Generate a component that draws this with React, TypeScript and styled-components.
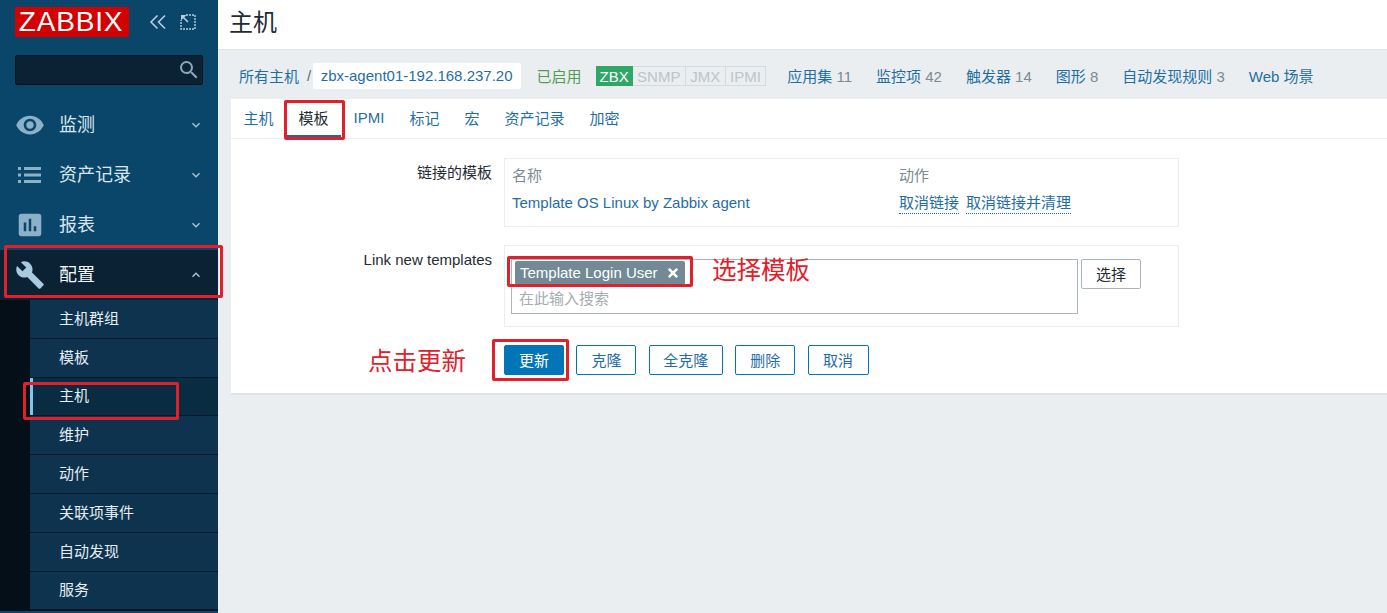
import React from 'react';
import styled, { createGlobalStyle } from 'styled-components';
import { MdVisibility, MdAssessment, MdBuild, MdSearch, MdExpandMore, MdExpandLess } from 'react-icons/md';
import { FaTimes } from 'react-icons/fa';

const FONT = `"Liberation Sans", "Noto Sans CJK SC", sans-serif`;

const GlobalStyle = createGlobalStyle`
  html, body {
    margin: 0;
    padding: 0;
    height: 100%;
    overflow: hidden;
    background: #ebeef0;
    font-family: ${FONT};
    font-size: 15px;
  }
  * { box-sizing: border-box; }
`;

const Page = styled.div`
  position: relative;
  display: flex;
  width: 1387px;
  height: 613px;
  overflow: hidden;
`;

/* sidebar */
const Sidebar = styled.aside`
  width: 218px;
  flex: none;
  background: #0a466a;
  display: flex;
  flex-direction: column;
`;

const LogoRow = styled.div`
  display: flex;
  align-items: center;
  height: 30px;
  margin: 7px 0 0 15px;
`;

const Logo = styled.div`
  width: 114px;
  height: 30px;
  padding-right: 2px;
  background: #d40000;
  color: #fff;
  font-size: 28px;
  line-height: 30px;
  text-align: center;
  letter-spacing: 0.8px;
`;

const LogoTools = styled.div`
  display: flex;
  align-items: center;
  gap: 13px;
  margin-left: 20px;
  color: #b7cfe0;
`;

const SearchBox = styled.div`
  width: 188px;
  height: 30px;
  margin: 18px 0 15px 15px;
  background: #0a2233;
  border: 1px solid #04121c;
  border-radius: 2px;
  display: flex;
  align-items: center;
  justify-content: flex-end;
  padding-right: 1px;
  color: #8ba8ba;
  font-size: 24px;
`;

const MenuItem = styled.div<{ $active?: boolean }>`
  height: 50px;
  display: flex;
  align-items: center;
  background: ${p => (p.$active ? '#0a2233' : 'transparent')};
  color: ${p => (p.$active ? '#f2f6f9' : '#dbe7ef')};
  font-size: 18px;
`;

const MenuIcon = styled.div<{ $active?: boolean }>`
  width: 59px;
  flex: none;
  display: flex;
  justify-content: center;
  color: ${p => (p.$active ? '#a9c9e0' : '#8db0c9')};
  font-size: 30px;
`;

const MenuLabel = styled.div`
  flex: 1;
  padding-bottom: 5px;
`;

const MenuCaret = styled.div`
  width: 44px;
  flex: none;
  display: flex;
  justify-content: center;
  font-size: 16px;
  color: #a9c4d6;
`;

const SubMenu = styled.div`
  background: #040f17;
  padding-left: 30px;
  height: 311px;
  flex: none;
`;

const SubItem = styled.div<{ $active?: boolean }>`
  position: relative;
  height: 38.8px;
  display: flex;
  align-items: center;
  padding: 0 0 3px 29px;
  background: ${p => (p.$active ? '#0a2c43' : '#0e334e')};
  border-bottom: 1px solid #06192a;
  color: #e6eef4;
  font-size: 15px;

  ${p =>
    p.$active &&
    `&::before {
      content: '';
      position: absolute;
      left: 0;
      top: 0;
      bottom: 0;
      width: 3px;
      background: #7fc4f2;
    }`}
`;

/* main area */
const Main = styled.main`
  flex: 1;
  display: flex;
  flex-direction: column;
  min-width: 0;
`;

const Header = styled.header`
  height: 50px;
  flex: none;
  background: #fff;
  border-bottom: 1px solid #dfe4e7;
  padding: 5px 0 0 12px;
`;

const Title = styled.h1`
  margin: 0 0 0 -1px;
  font-size: 24px;
  font-weight: 400;
  line-height: 36px;
  color: #1f2c33;
`;

const NavBar = styled.nav`
  height: 49px;
  flex: none;
  display: flex;
  align-items: center;
  padding: 2px 0 0 21px;
  color: #1f6ea3;
`;

const NavLink = styled.span`
  color: #1f6ea3;
  white-space: nowrap;
`;

const Slash = styled.span`
  margin: 0 1.5px 0 8px;
  color: #5a6a75;
`;

const HostChip = styled.span`
  background: #fff;
  border-radius: 2px;
  height: 26px;
  line-height: 26px;
  padding: 0 8px;
  color: #1f6ea3;
  white-space: nowrap;
`;

const Enabled = styled.span`
  margin: 0 14px 0 16px;
  color: #4f9d55;
`;

const Status = styled.div`
  display: flex;
  height: 20px;
  margin-right: 21px;
`;

const StatusTag = styled.span<{ $on?: boolean }>`
  padding: 0 ${p => (p.$on ? '3px' : '4.4px')};
  line-height: 19px;
  text-align: center;
  color: ${p => (p.$on ? '#fff' : '#bcc5ca')};
  background: ${p => (p.$on ? '#2fa866' : '#ebeef0')};
  border: 1px solid ${p => (p.$on ? '#2fa866' : '#d5dadd')};
  border-left-width: ${p => (p.$on ? '1px' : '0')};
`;

const NavLinks = styled.div`
  display: flex;
  gap: 24px;
`;

const Count = styled.span`
  color: #7b8a93;
`;

const Card = styled.section`
  margin-left: 13px;
  height: 296px;
  flex: none;
  background: #fff;
  border-bottom: 2px solid #dfe4e7;
`;

const Tabs = styled.div`
  height: 40px;
  display: flex;
  border-bottom: 1px solid #ebeef0;
`;

const Tab = styled.div<{ $active?: boolean }>`
  height: 39px;
  padding: 0 12.5px;
  display: flex;
  align-items: center;
  color: ${p => (p.$active ? '#1f2c33' : '#1f6ea3')};
  border-bottom: 3px solid ${p => (p.$active ? '#2b5f9e' : 'transparent')};
`;

const Form = styled.div`
  display: flex;
  flex-direction: column;
  padding-top: 19px;
`;

const FormRow = styled.div<{ $gap: number }>`
  display: flex;
  margin-bottom: ${p => p.$gap}px;
`;

const FormLabel = styled.div`
  width: 261px;
  flex: none;
  text-align: right;
  padding-top: 5px;
  color: #1f2c33;
  line-height: 20px;
`;

const FormValue = styled.div<{ $h: number }>`
  width: 675px;
  height: ${p => p.$h}px;
  margin-left: 12px;
  border: 1px solid #ebeef0;
`;

const LinkedGrid = styled.div`
  display: grid;
  grid-template-columns: 387px 1fr;
  padding: 7px 7px 0;
  row-gap: 7px;
  line-height: 20px;
`;

const ColHead = styled.div`
  color: #7b8a93;
`;

const TemplateLink = styled.span`
  color: #1f6ea3;
`;

const Actions = styled.div`
  display: flex;
  gap: 7px;
`;

const ActionLink = styled.span`
  color: #1f6ea3;
  border-bottom: 1px dotted #1f6ea3;
`;

const PickerRow = styled.div`
  display: flex;
  gap: 3px;
  padding: 13px 0 0 6px;
`;

const Picker = styled.div`
  width: 567px;
  height: 55px;
  border: 1px solid #acb5ba;
  padding: 1px 3px;
`;

const SelectedTag = styled.div`
  display: inline-flex;
  align-items: center;
  height: 24px;
  padding: 0 5px 1px 5px;
  border-radius: 2px;
  background: #738a96;
  color: #fff;
  white-space: nowrap;
`;

const TagRemove = styled.span`
  display: flex;
  margin-left: 8px;
  font-size: 14px;
`;

const Placeholder = styled.div`
  padding: 4px 4px 0;
  color: #a6acb0;
  line-height: 20px;
`;

const SelectButton = styled.div`
  width: 60px;
  height: 30px;
  padding-bottom: 2px;
  border: 1px solid #acb5ba;
  border-radius: 2px;
  display: flex;
  align-items: center;
  justify-content: center;
  color: #1f2c33;
`;

const ButtonRow = styled.div`
  display: flex;
  gap: 12.4px;
  margin-left: 273px;
`;

const Button = styled.div<{ $primary?: boolean; $w: number }>`
  width: ${p => p.$w}px;
  height: 30px;
  padding-bottom: 2px;
  display: flex;
  align-items: center;
  justify-content: center;
  border: 1px solid #0275b8;
  border-radius: 2px;
  background: ${p => (p.$primary ? '#0275b8' : '#fff')};
  color: ${p => (p.$primary ? '#fff' : '#1f6ea3')};
`;

/* red marks added on top of the screenshot */
const Mark = styled.div<{ $x: number; $y: number; $w: number; $h: number }>`
  position: absolute;
  left: ${p => p.$x}px;
  top: ${p => p.$y}px;
  width: ${p => p.$w}px;
  height: ${p => p.$h}px;
  border: 3px solid #e0202a;
  border-radius: 2px;
`;

const Note = styled.div<{ $x: number; $y: number }>`
  position: absolute;
  left: ${p => p.$x}px;
  top: ${p => p.$y}px;
  color: #e0202a;
  font-size: 24.5px;
  line-height: 30px;
  white-space: nowrap;
`;

const ListIcon = () => (
  <svg width="24" height="18" viewBox="0 0 24 18" fill="currentColor">
    <path d="M0 1h3v3H0zM0 7.500h3v3H0zM0 14h3v3H0zM6 1h17v3H6zM6 7.500h17v3H6zM6 14h17v3H6z" />
  </svg>
);

const menu = [
  { label: '监测', icon: <MdVisibility /> },
  { label: '资产记录', icon: <ListIcon /> },
  { label: '报表', icon: <MdAssessment /> },
];
const subMenu = ['主机群组', '模板', '主机', '维护', '动作', '关联项事件', '自动发现', '服务'];
const tabs = ['主机', '模板', 'IPMI', '标记', '宏', '资产记录', '加密'];
const navLinks: [string, string][] = [
  ['应用集', '11'],
  ['监控项', '42'],
  ['触发器', '14'],
  ['图形', '8'],
  ['自动发现规则', '3'],
  ['Web 场景', ''],
];

const CollapseIcon = () => (
  <svg width="18" height="16" viewBox="0 0 18 16" fill="none" stroke="currentColor" strokeWidth="1.6">
    <path d="M8.5 1.500 2 8l6.500 6.500M16 1.500 9.500 8l6.500 6.500" />
  </svg>
);

const KioskIcon = () => (
  <svg width="16" height="16" viewBox="0 0 16 16" fill="none" stroke="currentColor">
    <path d="M6 1h9v14H1V6" strokeWidth="1.4" strokeDasharray="2 1" />
    <path d="M1 1h5.500L1 6.500z" fill="currentColor" stroke="none" />
    <path d="M3 3l5 5" strokeWidth="1.6" />
  </svg>
);

export default function App() {
  return (
    <Page>
      <GlobalStyle />
      <Sidebar>
        <LogoRow>
          <Logo>ZABBIX</Logo>
          <LogoTools>
            <CollapseIcon />
            <KioskIcon />
          </LogoTools>
        </LogoRow>
        <SearchBox>
          <MdSearch />
        </SearchBox>
        {menu.map(m => (
          <MenuItem key={m.label}>
            <MenuIcon>{m.icon}</MenuIcon>
            <MenuLabel>{m.label}</MenuLabel>
            <MenuCaret>
              <MdExpandMore />
            </MenuCaret>
          </MenuItem>
        ))}
        <MenuItem $active>
          <MenuIcon $active>
            <MdBuild />
          </MenuIcon>
          <MenuLabel>配置</MenuLabel>
          <MenuCaret>
            <MdExpandLess />
          </MenuCaret>
        </MenuItem>
        <SubMenu>
          {subMenu.map(s => (
            <SubItem key={s} $active={s === '主机'}>
              {s}
            </SubItem>
          ))}
        </SubMenu>
      </Sidebar>

      <Main>
        <Header>
          <Title>主机</Title>
        </Header>
        <NavBar>
          <NavLink>所有主机</NavLink>
          <Slash>/</Slash>
          <HostChip>zbx-agent01-192.168.237.20</HostChip>
          <Enabled>已启用</Enabled>
          <Status>
            <StatusTag $on>ZBX</StatusTag>
            <StatusTag>SNMP</StatusTag>
            <StatusTag>JMX</StatusTag>
            <StatusTag>IPMI</StatusTag>
          </Status>
          <NavLinks>
            {navLinks.map(([name, count]) => (
              <NavLink key={name}>
                {name} {count && <Count>{count}</Count>}
              </NavLink>
            ))}
          </NavLinks>
        </NavBar>
        <Card>
          <Tabs>
            {tabs.map(t => (
              <Tab key={t} $active={t === '模板'}>
                {t}
              </Tab>
            ))}
          </Tabs>
          <Form>
            <FormRow $gap={18}>
              <FormLabel>链接的模板</FormLabel>
              <FormValue $h={69}>
                <LinkedGrid>
                  <ColHead>名称</ColHead>
                  <ColHead>动作</ColHead>
                  <TemplateLink>Template OS Linux by Zabbix agent</TemplateLink>
                  <Actions>
                    <ActionLink>取消链接</ActionLink>
                    <ActionLink>取消链接并清理</ActionLink>
                  </Actions>
                </LinkedGrid>
              </FormValue>
            </FormRow>
            <FormRow $gap={18}>
              <FormLabel>Link new templates</FormLabel>
              <FormValue $h={82}>
                <PickerRow>
                  <Picker>
                    <SelectedTag>
                      Template Login User
                      <TagRemove>
                        <FaTimes />
                      </TagRemove>
                    </SelectedTag>
                    <Placeholder>在此输入搜索</Placeholder>
                  </Picker>
                  <SelectButton>选择</SelectButton>
                </PickerRow>
              </FormValue>
            </FormRow>
            <ButtonRow>
              <Button $primary $w={60}>更新</Button>
              <Button $w={60}>克隆</Button>
              <Button $w={74}>全克隆</Button>
              <Button $w={60}>删除</Button>
              <Button $w={61}>取消</Button>
            </ButtonRow>
          </Form>
        </Card>
      </Main>

      <Mark $x={4} $y={245} $w={219} $h={53} />
      <Mark $x={23} $y={382} $w={156} $h={38} />
      <Mark $x={284} $y={100} $w={61} $h={40} />
      <Mark $x={507} $y={256} $w={186} $h={31} />
      <Mark $x={492} $y={339} $w={77} $h={42} />
      <Note $x={712} $y={256}>选择模板</Note>
      <Note $x={368} $y={347}>点击更新</Note>
    </Page>
  );
}
